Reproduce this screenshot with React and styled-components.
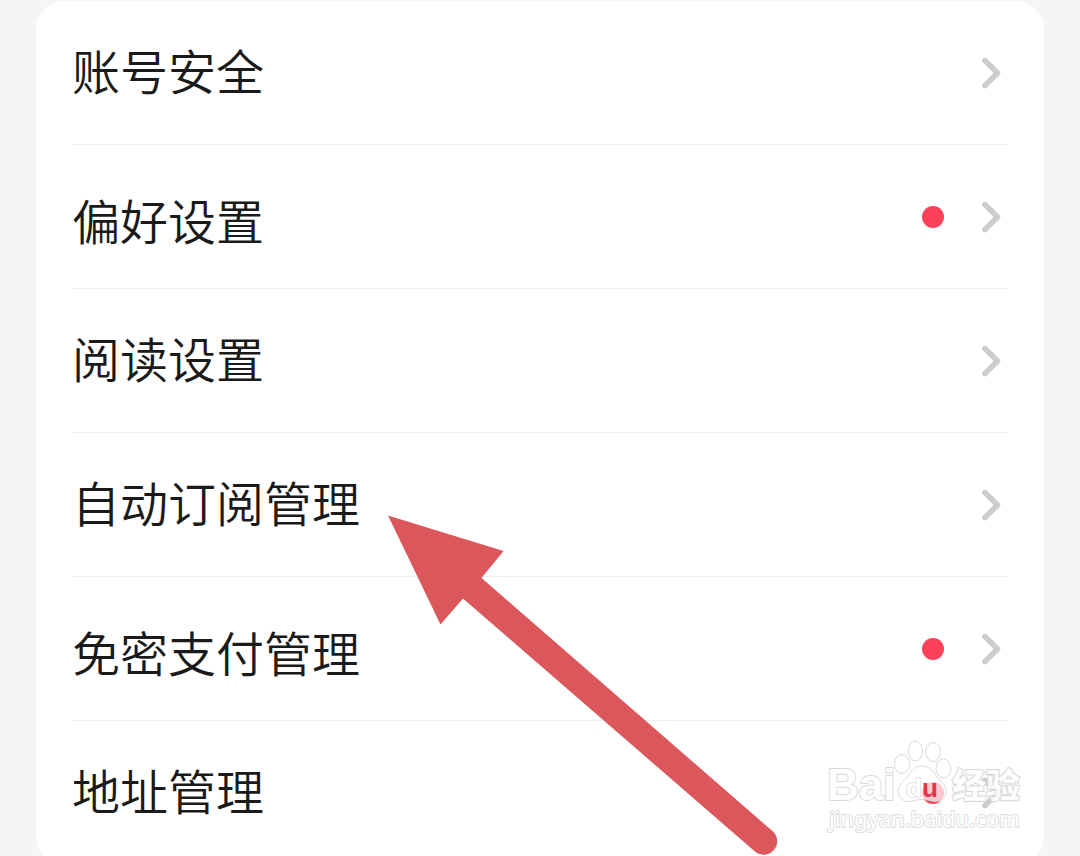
import React from 'react';
import styled, { createGlobalStyle } from 'styled-components';

const GlobalStyle = createGlobalStyle`
  *,
  *::before,
  *::after {
    box-sizing: border-box;
  }

  body {
    margin: 0;
    background: #f5f5f5;
    color: #1a1a1a;
    font-family: 'Noto Sans CJK SC', sans-serif;
  }
`;

const Page = styled.main`
  position: relative;
  height: 100vh;
  overflow: hidden;
  padding: 1px 36px 0;
`;

const Card = styled.nav`
  background: #fff;
  border-radius: 28px;
  padding: 0 36px;
`;

const List = styled.ul`
  list-style-type: none;
  margin: 0;
  padding: 0;
`;

const Item = styled.li`
  border-bottom: 1px solid #ededed;

  &:last-child {
    border-bottom-color: transparent;
  }
`;

const RowLink = styled.a`
  display: flex;
  align-items: center;
  height: 143px;
  color: inherit;
  text-decoration: none;
`;

// Some labels sit a little lower in their row
const Label = styled.span`
  flex-grow: 1;
  padding: ${({ $lowered }) => ($lowered ? '4px 0 0' : '0 0 8px')};
  font-size: 48px;
  font-weight: 350;
  line-height: 72px;
`;

const Dot = styled.span`
  width: 22px;
  height: 22px;
  margin-right: 36px;
  border-radius: 50%;
  background: #fb4159;
`;

const Arrow = styled.svg`
  position: absolute;
  top: 510px;
  left: 380px;
  pointer-events: none;
`;

const Watermark = styled.svg`
  position: absolute;
  top: 736px;
  right: 50px;
  pointer-events: none;

  text {
    paint-order: stroke;
  }
`;

const Chevron = () => (
  <svg width="28" height="36" viewBox="0 0 28 36" aria-hidden="true">
    <path
      d="M5 5.5 L17.5 18 L5 30.5"
      fill="none"
      stroke="#cdcdcd"
      strokeWidth="5.6"
      strokeLinecap="round"
      strokeLinejoin="round"
    />
  </svg>
);

const items = [
  { label: '账号安全', href: '#security' },
  { label: '偏好设置', href: '#preferences', badge: true, lowered: true },
  { label: '阅读设置', href: '#reading' },
  { label: '自动订阅管理', href: '#subscriptions' },
  { label: '免密支付管理', href: '#payments', badge: true, lowered: true },
  { label: '地址管理', href: '#addresses', badge: true },
];

const BaiduWatermark = () => (
  <Watermark width="210" height="104" viewBox="820 736 210 104">
    <g
      fill="#fff"
      stroke="#d9d9d9"
      strokeWidth="2"
      strokeLinejoin="round"
      fontFamily="'Liberation Sans', 'Noto Sans CJK SC', sans-serif"
    >
      <text x="827" y="800" fontSize="44" fontWeight="700">
        Bai
      </text>
      <g fillOpacity="0.7" strokeWidth="1">
        <ellipse cx="902" cy="764" rx="7.5" ry="9.5" />
        <ellipse cx="915.5" cy="751" rx="7" ry="10" />
        <ellipse cx="933" cy="752" rx="7.5" ry="9.5" />
        <ellipse cx="943.5" cy="768.5" rx="7.5" ry="9.5" />
        <path d="M922 766 C930 766 934 772 937 777 C941 782 947 785 946 793 C945 801 938 802 932 801 C925 799 919 799 913 801 C905 803 898 799 898 791 C898 785 904 781 908 776 C912 771 914 766 922 766 Z" />
      </g>
      <text x="906" y="797" fontSize="26" fontWeight="700" strokeWidth="1.6">
        d
        <tspan fill="#e0344c" stroke="none">
          u
        </tspan>
      </text>
      <text x="952" y="798" fontSize="34" fontWeight="900" fillOpacity="0.85">
        经验
      </text>
      <text
        x="829"
        y="827"
        fontSize="22"
        stroke="#dedede"
        fontFamily="'Noto Sans', sans-serif"
      >
        jingyan.baidu.com
      </text>
    </g>
  </Watermark>
);

export default function App() {
  return (
    <>
      <GlobalStyle />
      <Page>
        <Card>
          <List>
            {items.map(({ label, href, badge, lowered }) => (
              <Item key={label}>
                <RowLink href={href}>
                  <Label $lowered={lowered}>{label}</Label>
                  {badge && <Dot />}
                  <Chevron />
                </RowLink>
              </Item>
            ))}
          </List>
        </Card>
        <Arrow width="410" height="350" viewBox="380 510 410 350">
          <path
            d="M388 515.5 L503.5 551 L481.5 578 L773.5 832 A13.5 13.5 0 0 1 755.5 852 L463 598.5 L440.5 624.5 Z"
            fill="#db575b"
          />
        </Arrow>
        <BaiduWatermark />
      </Page>
    </>
  );
}
